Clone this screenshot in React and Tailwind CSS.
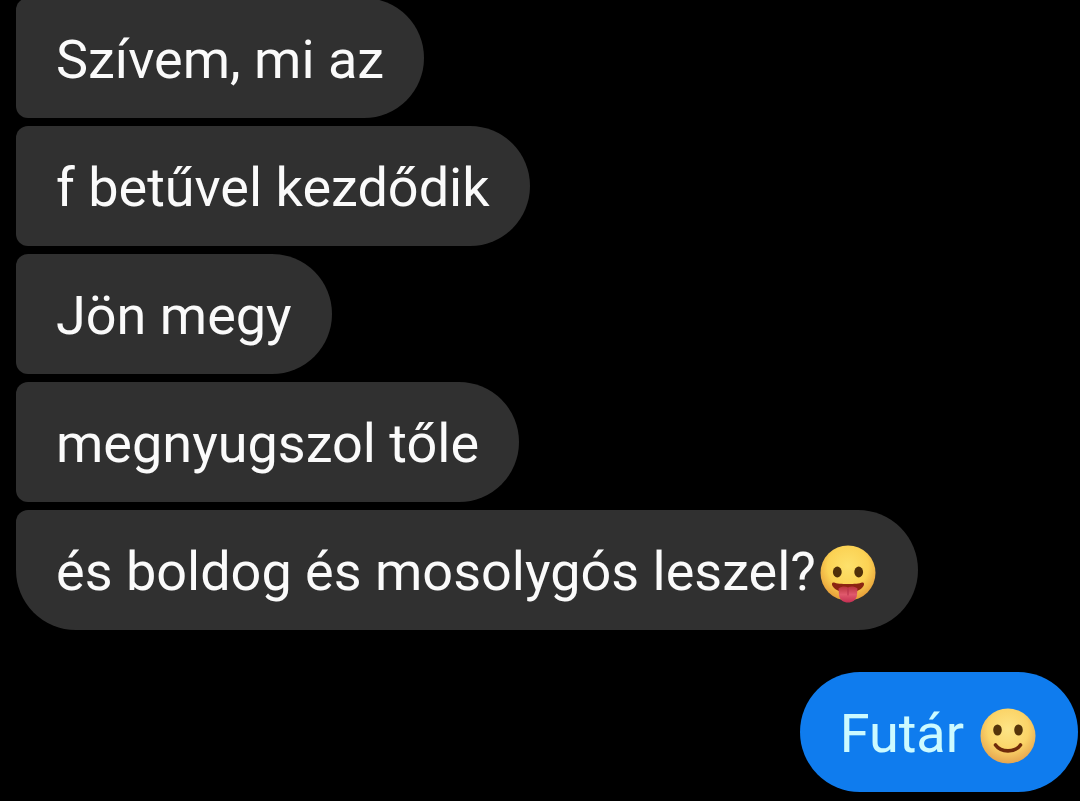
function TongueFace() {
  return (
    <svg viewBox="-2 -4 60 62" className="ml-0.5 h-[62px] w-[60px] shrink-0" role="img" aria-label="😛">
      <defs>
        <radialGradient id="tongueSkin" cx="0.5" cy="0.38" r="0.62">
          <stop offset="0" stopColor="#fde16c" />
          <stop offset="0.6" stopColor="#fbd254" />
          <stop offset="1" stopColor="#e59c38" />
        </radialGradient>
        <linearGradient id="tongue" x1="0" y1="0" x2="0" y2="1">
          <stop offset="0" stopColor="#b8323c" />
          <stop offset="0.5" stopColor="#e0596c" />
          <stop offset="1" stopColor="#c32f52" />
        </linearGradient>
      </defs>
      <circle cx="28" cy="28" r="27.5" fill="url(#tongueSkin)" />
      <ellipse cx="17.3" cy="27" rx="4.4" ry="5.4" fill="#4f3009" />
      <ellipse cx="38.7" cy="27" rx="4.4" ry="5.4" fill="#4f3009" />
      <path d="M14 37.5C18 39.5 38 39.5 42 37.5C44 37 44.6 39 43.5 41C41 45.5 34 47.5 28 47.5C22 47.5 15 45.5 12.5 41C11.4 39 12 37 14 37.5Z" fill="#8b2412" />
      <path d="M18.5 43.5C22 41 25.5 41 28 42.5C30.5 41 34 41 37.5 43.5L37 50C36 60 20 60 19 50Z" fill="url(#tongue)" />
      <path d="M28 44V50" stroke="#b52f49" strokeWidth="1" strokeLinecap="round" />
    </svg>
  );
}

function SmileFace() {
  return (
    <svg viewBox="-2 -5 60 62" className="h-[62px] w-[60px] shrink-0" role="img" aria-label="🙂">
      <defs>
        <radialGradient id="smileSkin" cx="0.5" cy="0.38" r="0.62">
          <stop offset="0" stopColor="#fde587" />
          <stop offset="0.6" stopColor="#fbd468" />
          <stop offset="1" stopColor="#e5a550" />
        </radialGradient>
      </defs>
      <circle cx="28" cy="28" r="27.5" fill="url(#smileSkin)" />
      <ellipse cx="17.5" cy="22" rx="4.3" ry="5.6" fill="#553409" />
      <ellipse cx="38.5" cy="22" rx="4.3" ry="5.6" fill="#553409" />
      <path d="M15.5 37C21 44.8 35 44.8 40.5 37" fill="none" stroke="#6f2a0a" strokeWidth="3.6" strokeLinecap="round" />
    </svg>
  );
}

const received = [
  { text: "Szívem, mi az" },
  { text: "f betűvel kezdődik" },
  { text: "Jön megy" },
  { text: "megnyugszol tőle" },
  { text: "és boldog és mosolygós leszel?", face: true },
];

export default function App() {
  return (
    <main className="min-h-screen overflow-hidden bg-black pb-2 pl-4 pr-0.5 font-['Roboto',sans-serif] text-[54px] leading-[64px] text-[#fafafa]">
      <ul className="-mt-0.5 flex flex-col items-start gap-2">
        {received.map(({ text, face }) => (
          <li
            key={text}
            className={`flex items-center rounded-l-xl rounded-r-[60px] bg-[#303030] px-10 pt-[30px] pb-[26px] ${face ? "rounded-bl-[60px]" : ""}`}
          >
            <span>{text}</span>
            {face && <TongueFace />}
          </li>
        ))}
      </ul>
      <div className="mt-[42px] flex justify-end">
        <p className="flex items-center gap-3.5 rounded-full bg-[#0f7cee] px-10 pt-[30px] pb-[26px] text-[#ccfaff]">
          <span>Futár</span>
          <SmileFace />
        </p>
      </div>
    </main>
  );
}
